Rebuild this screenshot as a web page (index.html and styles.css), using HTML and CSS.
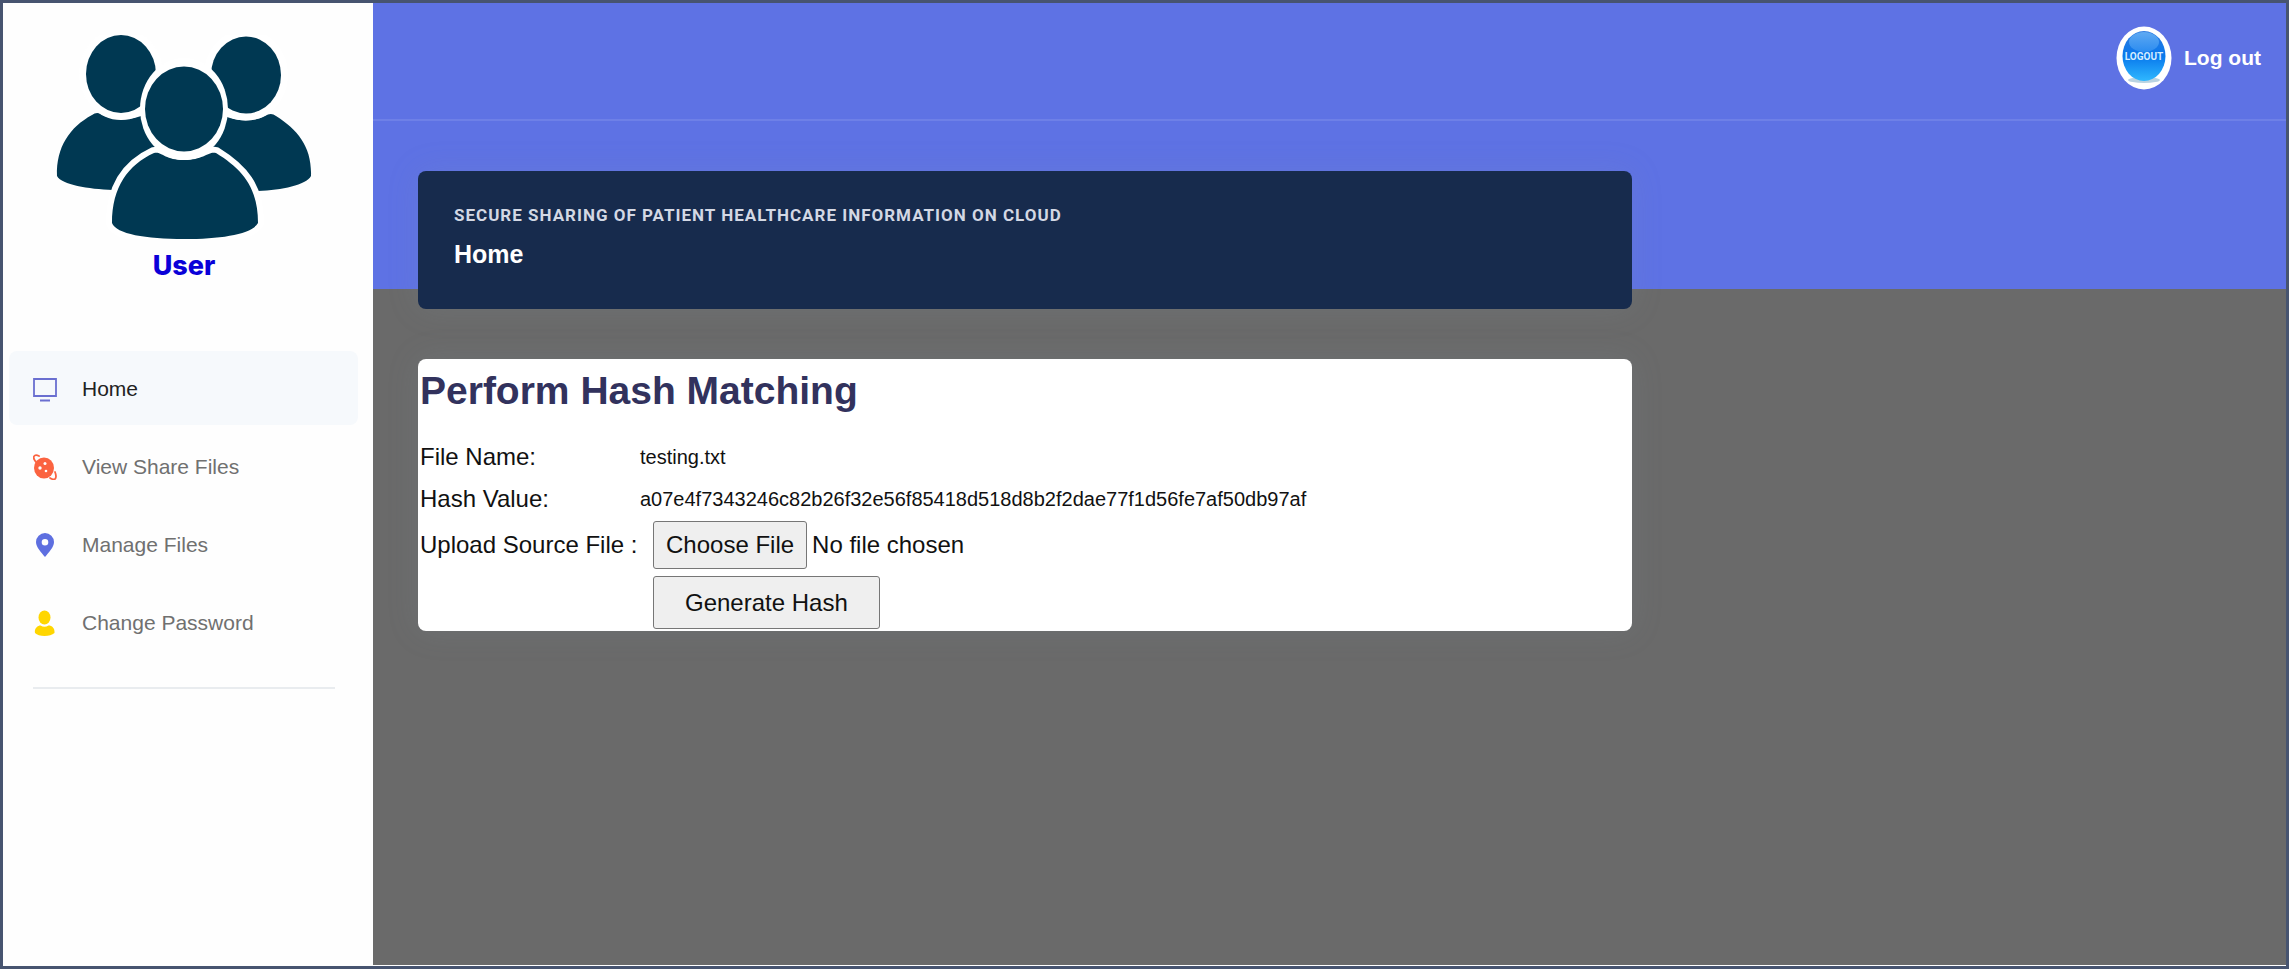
FILE: index.html
```html
<!DOCTYPE html>
<html lang="en">
<head>
<meta charset="utf-8">
<title>Home</title>
<link rel="stylesheet" href="styles.css">
</head>
<body>
<div class="page">
  <aside class="sidebar">
    <div class="profile">
      <svg class="profile-icon" viewBox="0 0 256 204" aria-hidden="true">
        <g fill="#003852" stroke="#fff">
          <g stroke="none">
            <path d="M36 80Q41 76 47 80C58 86 76 86 90 79L115 120L57 155C32 154 6 150 1 141C0 112 14 92 36 80Z"/>
            <path d="M220 81Q215 77 209 81C198 87 180 87 166 80L141 120L202 156C226 155 250 150 255 141C256 112 242 95 220 81Z"/>
          </g>
          <ellipse cx="65" cy="39" rx="35" ry="39" stroke-width="14" paint-order="stroke"/>
          <ellipse cx="190" cy="40" rx="35" ry="38.500" stroke-width="14" paint-order="stroke"/>
          <path d="M98 118C72 130 56 152 56 188C60 199 90 204 128 204C166 204 196 199 202 188C202 152 186 134 160 118C152 116 148 125 128 125C108 125 106 116 98 118Z" stroke-width="12" paint-order="stroke"/>
          <ellipse cx="128" cy="74" rx="44" ry="51" fill="#fff" stroke="none"/>
          <ellipse cx="128" cy="74" rx="39" ry="42.500" stroke="none"/>
        </g>
      </svg>
      <span class="profile-name">User</span>
    </div>
    <nav class="nav">
      <a class="nav-link active" href="#">
        <svg class="nav-icon" viewBox="0 0 24 26" aria-hidden="true"><path d="M1 3H23V20H1ZM7 24.500H17" fill="none" stroke="#6a6fd0" stroke-width="1.800"/></svg>
        Home
      </a>
      <a class="nav-link" href="#">
        <svg class="nav-icon" viewBox="0 0 24 26" aria-hidden="true"><g fill="none" stroke="#fb6340" stroke-width="1.800" stroke-linecap="round"><path d="M6 2C2 0 0 2 1 5Q2 7 3 8M22 18Q24 23 22 25Q20 26 17 24"/></g><ellipse cx="11" cy="14" rx="10" ry="10.500" fill="#fb6340"/><g fill="#fff"><circle cx="12" cy="9.500" r="1.500"/><circle cx="7" cy="14" r="1.700"/><circle cx="13" cy="17" r="1.300"/></g></svg>
        View Share Files
      </a>
      <a class="nav-link" href="#">
        <svg class="nav-icon" viewBox="0 0 24 26" aria-hidden="true"><path fill-rule="evenodd" d="M12 1A9 9 0 0 0 3 10C3 15 8 20 12 25C16 20 21 15 21 10A9 9 0 0 0 12 1ZM12 7A3.300 3.300 0 1 1 12 13.600A3.300 3.300 0 1 1 12 7Z" fill="#5e6fe0"/></svg>
        Manage Files
      </a>
      <a class="nav-link" href="#">
        <svg class="nav-icon" viewBox="0 0 24 26" aria-hidden="true"><g fill="#ffd600"><ellipse cx="11.500" cy="7.500" rx="6" ry="7"/><path d="M2 23C1 18 5 15.500 7.500 15.500Q11.500 18 15.500 15.500C19 15.500 22 18 21.500 23Q18 26 11.500 26Q5 26 2 23Z"/></g></svg>
        Change Password
      </a>
    </nav>
    <hr class="divider">
  </aside>

  <main class="main">
    <header class="topbar">
      <a class="logout" href="#">
        <svg class="logout-icon" viewBox="0 0 56 64" aria-hidden="true">
          <defs>
            <linearGradient id="ball" x1="0" y1="0" x2="0" y2="1"><stop offset="0" stop-color="#2f7be0"/><stop offset=".5" stop-color="#0878ec"/><stop offset="1" stop-color="#2fb8ff"/></linearGradient>
            <linearGradient id="gloss" x1="0" y1="0" x2="0" y2="1"><stop offset="0" stop-color="#5fa9f2"/><stop offset="1" stop-color="#2b8cf0"/></linearGradient>
          </defs>
          <ellipse cx="28" cy="32" rx="27.500" ry="31.500" fill="#fff"/>
          <ellipse cx="28" cy="54" rx="16" ry="3" fill="#b9d3e2"/>
          <ellipse cx="28" cy="30" rx="21.500" ry="25" fill="url(#ball)"/>
          <ellipse cx="28" cy="16" rx="15" ry="10" fill="url(#gloss)"/>
          <text class="logout-badge" x="28" y="34" text-anchor="middle">LOGOUT</text>
        </svg>
        Log out
      </a>
    </header>

    <div class="content">
      <section class="banner">
        <p class="banner-kicker">Secure sharing of patient healthcare information on cloud</p>
        <h1 class="banner-title">Home</h1>
      </section>

      <section class="card">
        <h2 class="card-title">Perform Hash Matching</h2>
        <form>
          <table class="details">
            <tr><th scope="row">File Name:</th><td class="value">testing.txt</td></tr>
            <tr><th scope="row">Hash Value:</th><td class="value">a07e4f7343246c82b26f32e56f85418d518d8b2f2dae77f1d56fe7af50db97af</td></tr>
            <tr class="upload-row"><th scope="row"><label for="source">Upload Source File :</label></th><td class="control"><input class="file" type="file" id="source"></td></tr>
            <tr class="submit-row"><td></td><td class="control"><button class="submit" type="button">Generate Hash</button></td></tr>
          </table>
        </form>
      </section>
    </div>
  </main>
</div>
</body>
</html>
```
FILE: styles.css
```css
* { box-sizing: border-box; }

body {
  margin: 0;
  font-family: "Liberation Sans", Arial, sans-serif;
  color: #111;
}

.page {
  display: flex;
  min-height: 100vh;
  border: 3px solid #475470;
  background: #fff;
}

.sidebar {
  flex: 0 0 370px;
  background: #fefefe;
}

.profile {
  display: flex;
  flex-direction: column;
  align-items: center;
  gap: 10px;
  padding: 32px 8px 0 0;
}

.profile-icon { width: 256px; height: 204px; }

.profile-name {
  font: 800 27px/34px Inter, sans-serif;
  color: #0a00d8;
}

.nav {
  display: flex;
  flex-direction: column;
  gap: 4px;
  margin: 68px 15px 0 6px;
}

.nav-link {
  display: flex;
  align-items: center;
  gap: 25px;
  height: 74px;
  padding: 2px 0 0 24px;
  border-radius: 8px;
  color: #707070;
  font-size: 21px;
  text-decoration: none;
}

.nav-link.active { background: #f6f9fc; color: #222; }

.nav-icon { width: 24px; height: 26px; }

.divider {
  margin: 28px 38px 0 30px;
  border: 0;
  border-top: 2px solid #e9ecef;
}

.main {
  flex: 1;
  min-width: 0;
  margin-bottom: 1px;
  background: linear-gradient(#5e72e4 286px, #6a6a6a 286px);
}

.topbar {
  display: flex;
  justify-content: flex-end;
  padding: 23px 25px 29px;
  border-bottom: 2px solid #6e80e7;
}

.logout {
  display: flex;
  align-items: center;
  gap: 12px;
  color: #fff;
  font-size: 21px;
  font-weight: bold;
  text-decoration: none;
}

.logout-icon { width: 56px; height: 64px; }

.logout-badge { font: bold 10px Roboto, sans-serif; fill: #d4ebff; }

.content {
  display: flex;
  flex-direction: column;
  gap: 50px;
  padding: 50px 45px;
}

.banner,
.card {
  width: 66.6%;
  border-radius: 8px;
  box-shadow: 0 0 32px rgba(136, 152, 170, 0.15);
}

.banner {
  display: flex;
  flex-direction: column;
  gap: 12px;
  padding: 32px 36px 40px;
  background: #172b4d;
}

.banner-kicker {
  margin: 0;
  color: #d3d8e4;
  font: bold 17px/24px Roboto, sans-serif;
  letter-spacing: 1px;
  text-transform: uppercase;
}

.banner-title {
  margin: 0;
  color: #fff;
  font-size: 25px;
  line-height: 30px;
}

.card { padding: 4px 2px 0; background: #fff; }

.card-title {
  margin: 0 0 17px;
  color: #32325d;
  font-size: 39px;
  line-height: 56px;
}

.details { border-collapse: collapse; }

.details th,
.details td { height: 42px; padding: 0; text-align: left; }

.details th {
  width: 220px;
  font-size: 24px;
  font-weight: normal;
}

.details .value { font-size: 20px; }

.details .control { padding-left: 13px; }

.details .upload-row > * { height: 50px; }

.details .submit-row > * { height: 61px; padding-bottom: 2px; vertical-align: bottom; }

.file {
  display: block;
  color: #111;
  font: 24px "Liberation Sans", Arial, sans-serif;
}

.file::file-selector-button {
  height: 48px;
  margin: 0 5px 0 0;
  padding: 0 12px;
  border: 1px solid #767676;
  border-radius: 3px;
  background: #efefef;
  color: #111;
  font: inherit;
}

.submit {
  display: block;
  height: 53px;
  padding: 0 31px;
  border: 1px solid #767676;
  border-radius: 3px;
  background: #efefef;
  color: #111;
  font: 24px "Liberation Sans", Arial, sans-serif;
}
```
